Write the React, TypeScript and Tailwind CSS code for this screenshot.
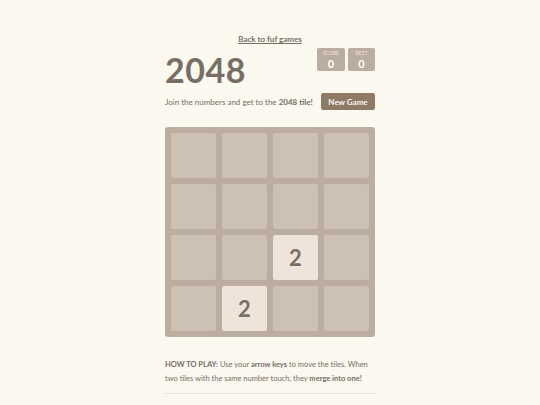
export default function App() {
  const cells = [
    0, 0, 0, 0,
    0, 0, 0, 0,
    0, 0, 2, 0,
    0, 2, 0, 0,
  ];

  return (
    <div className="min-h-[405px] w-full bg-[#faf8ef] text-[#776e65]" style={{ fontFamily: 'Lato, "Open Sans", sans-serif' }}>
      <div className="mx-auto w-[210px] pt-[24px]">
        <div className="text-center">
          <a href="#" className="text-[8px] font-bold underline text-[#776e65]">Back to fuf games</a>
        </div>

        <div className="-mt-[4px] flex items-start justify-between">
          <h1 className="text-[34px] font-bold leading-none mt-[9px] tracking-[0.5px]">2048</h1>
          <div className="flex gap-[3px] mt-[4px]">
            <div className="w-[28px] h-[23px] bg-[#bbada0] rounded-[2px] flex flex-col items-center justify-center">
              <span className="text-[5px] text-[#eee4da] uppercase leading-none">Score</span>
              <span className="text-[11px] font-bold text-white leading-none mt-[2px]">0</span>
            </div>
            <div className="w-[27px] h-[23px] bg-[#bbada0] rounded-[2px] flex flex-col items-center justify-center">
              <span className="text-[5px] text-[#eee4da] uppercase leading-none">Best</span>
              <span className="text-[11px] font-bold text-white leading-none mt-[2px]">0</span>
            </div>
          </div>
        </div>

        <div className="mt-[6px] flex items-center justify-between">
          <p className="text-[8px]">Join the numbers and get to the <b>2048 tile!</b></p>
          <button className="w-[54px] h-[17px] bg-[#8f7a66] text-[#f9f6f2] text-[8px] font-bold rounded-[2px]">New Game</button>
        </div>

        <div className="mt-[17px] bg-[#bbada0] rounded-[3px] p-[6px] grid grid-cols-4 gap-[6px]">
          {cells.map((v, i) => (
            <div
              key={i}
              className={
                v
                  ? "h-[45px] rounded-[2px] bg-[#eee4da] flex items-center justify-center text-[22px] font-bold text-[#776e65]"
                  : "h-[45px] rounded-[2px] bg-[#cdc1b4]"
              }
            >
              {v ? v : null}
            </div>
          ))}
        </div>

        <p className="mt-[21px] text-[7.5px] leading-[14px]">
          <b>HOW TO PLAY:</b> Use your <b>arrow keys</b> to move the tiles. When two tiles with the same number touch, they <b>merge into one!</b>
        </p>
        <hr className="mt-[7px] border-t border-[#e6e1d6]" />
      </div>
    </div>
  );
}
